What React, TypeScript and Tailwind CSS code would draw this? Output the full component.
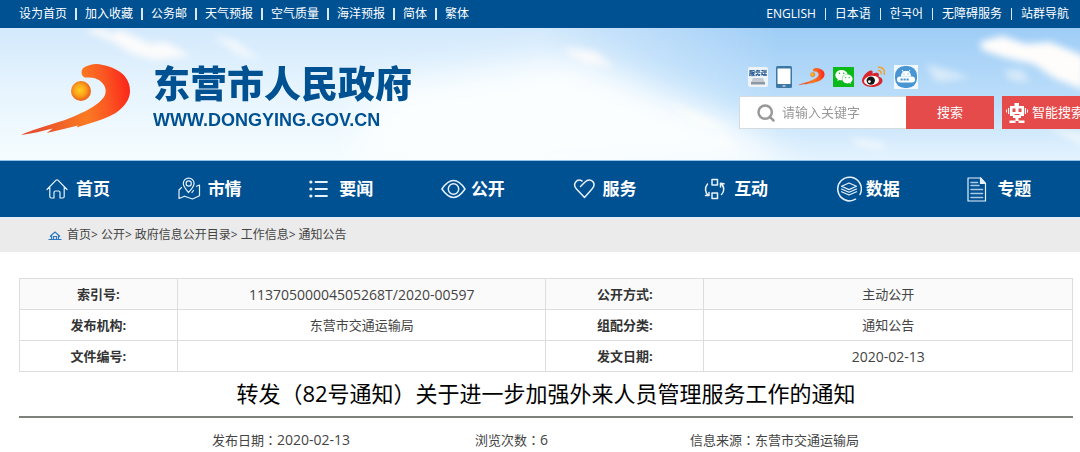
import type { ReactNode } from 'react';
import { Search } from 'lucide-react';
import { FaWeixin } from 'react-icons/fa';

/* ---------------- Data ---------------- */
const leftLinks = ['设为首页', '加入收藏', '公务邮', '天气预报', '空气质量', '海洋预报', '简体', '繁体'];
const rightLinks = ['ENGLISH', '日本语', '한국어', '无障碍服务', '站群导航'];
const crumbs = ['首页', '公开', '政府信息公开目录', '工作信息', '通知公告'];

const infoRows = [
  ['索引号:', '11370500004505268T/2020-00597', '公开方式:', '主动公开'],
  ['发布机构:', '东营市交通运输局', '组配分类:', '通知公告'],
  ['文件编号:', '', '发文日期:', '2020-02-13'],
];

/* ---------------- Nav icons ---------------- */
const NavIcon = ({ children }: { children: ReactNode }) => (
  <svg
    viewBox="0 0 26 26"
    className="h-[26px] w-[26px] shrink-0"
    fill="none"
    stroke="#e6f1fb"
    strokeWidth="1.2"
    strokeLinecap="round"
    strokeLinejoin="round"
    aria-hidden="true"
  >
    {children}
  </svg>
);

const navItems = [
  {
    label: '首页',
    icon: (
      <path d="M1 13.500 9.800 4.400q1.200-1 2.400 0L21 13.500M3.800 11.500V20.500q0 1.500 1.500 1.500H8V16.500q0-1.500 1.500-1.500h3q1.500 0 1.500 1.500V22h2.700q1.500 0 1.500-1.500v-9" />
    ),
  },
  {
    label: '市情',
    icon: (
      <>
        <path d="M10.500 16.500C7.500 13 5.300 10.500 5.300 7.500a5.400 5.400 0 0 1 10.800 0c0 3-2.600 5.500-5.600 9Z" />
        <circle cx="10.700" cy="7.500" r="2.600" />
        <path d="M3.500 11.500 1 14v8.500l5.500-2.300 8 2.800 7-3.300V9L18.500 10.200M15.500 14.500l-1.500 2" />
      </>
    ),
  },
  {
    label: '要闻',
    icon: (
      <>
        <path strokeWidth="1.800" d="M6.500 6H18M6.500 13H18M6.500 20H18" />
        <path strokeWidth="3.200" d="M1.800 6h.1M1.800 13h.1M1.800 20h.1" />
      </>
    ),
  },
  {
    label: '公开',
    icon: (
      <g strokeWidth="1.500">
        <path d="M.9 13C5 7 8.500 4.600 12.500 4.600S20 7 24 13c-4 6-7.500 8.400-11.500 8.400S5 19 .9 13Z" />
        <circle cx="12.500" cy="13" r="5.200" />
      </g>
    ),
  },
  {
    label: '服务',
    icon: (
      <path
        strokeWidth="1.500"
        d="M7.500 10.500 12 6c3-3 6.500-2.500 8.200 0 1.500 2.500.8 5-1.200 7l-7.500 8.500L3.500 13c-2-2.200-2.400-5-.8-7C4.500 3.700 7 3.800 9 5"
      />
    ),
  },
  {
    label: '互动',
    icon: (
      <g strokeWidth="1.500">
        <path d="M8 3.500h5.500V9H8zM8 17h5.500v5.500H8z" />
        <path d="M3.500 8C.5 11.500 1 17 4.500 19.500M1.500 19.500h3.500V16.500M17.500 18.500c3.200-3 3-8.500-.8-11M20 7.800l-3.500-.5V11" />
      </g>
    ),
  },
  {
    label: '数据',
    icon: (
      <>
        <path strokeWidth="1.500" d="M24 18.500A11.800 11.800 0 1 0 19.500 23.200" />
        <path d="m13 7 7.500 3.300-7.500 3.300-7.500-3.300ZM5.500 13l7.500 3.300 7.500-3.300M5.500 15.700l7.500 3.300 7.500-3.300" />
      </>
    ),
  },
  {
    label: '专题',
    icon: (
      <>
        <path d="M1 2h12.500l5 5.500V25H1z" />
        <path fill="#e6f1fb" d="M13.500 2v5.500h5z" />
        <path stroke="#a9cbe6" strokeWidth="1.600" d="M4 6.500h6.500M4 9.500h8M4 13.500h11.500M4 17.500h11.500M4 21.500h11.500" />
      </>
    ),
  },
];

/* ---------------- Drawings ---------------- */
const Swoosh = ({ className, id }: { className: string; id: string }) => (
  <svg viewBox="0 0 112 74" className={className} aria-hidden="true">
    <defs>
      <linearGradient id={id} x1="0" x2="1" y1="0.3" y2="0.2">
        <stop offset="0.1" stopColor="#e8502e" />
        <stop offset="0.55" stopColor="#fb7a22" />
        <stop offset="0.75" stopColor="#fb5a22" />
        <stop offset="1" stopColor="#fb2218" />
      </linearGradient>
      <radialGradient id={`${id}-ball`} cx="0.45" cy="0.45">
        <stop offset="0" stopColor="#ffd21f" />
        <stop offset="0.6" stopColor="#fba01c" />
        <stop offset="1" stopColor="#ee6a1a" />
      </radialGradient>
    </defs>
    <path
      fill={`url(#${id})`}
      d="M61.700 7C62 4 66 2 70 1 74-.3 78-.3 83 1c9 2 18 6 22 11.500 3.500 4.500 5 9 5 14.500 0 6-3 12-8.500 17.300C95 51 85 54.500 75 57.700L56.700 63.500 58 61.500 41.700 65.500 26.700 69l6-4.500C23 67 12 69.500 1 71c7-4 24-8.500 44-15 10-3.800 20-8.300 28-13.300 8-5 12.700-10 12.700-15.700C85.700 21 81 16.500 75 14.300c-3-1-8 .2-11.200-1.300-2-1.500-2.500-3.500-2.100-6Z"
    />
    <circle cx="61" cy="27" r="10" fill={`url(#${id}-ball)`} />
  </svg>
);

const Sky = () => (
  <svg
    viewBox="0 0 1080 132"
    preserveAspectRatio="none"
    className="absolute inset-0 h-full w-full"
    aria-hidden="true"
  >
    <defs>
      <linearGradient id="sky-base" x2="0" y2="1">
        <stop offset="0" stopColor="#d3e9fc" />
        <stop offset="0.5" stopColor="#e8f5fe" />
        <stop offset="1" stopColor="#f5fcff" />
      </linearGradient>
      <linearGradient id="sky-deep" x2="0" y2="1">
        <stop offset="0" stopColor="#9fcdf6" />
        <stop offset="0.55" stopColor="#bcdefa" />
        <stop offset="1" stopColor="#e4f3fe" />
      </linearGradient>
      <linearGradient id="sky-fade">
        <stop offset="0.5" stopColor="#000" />
        <stop offset="0.72" stopColor="#fff" />
      </linearGradient>
      <mask id="sky-mask">
        <rect width="1080" height="132" fill="url(#sky-fade)" />
      </mask>
      <filter id="soft" x="-30%" y="-60%" width="160%" height="220%">
        <feGaussianBlur stdDeviation="3.500" />
      </filter>
      <filter id="haze" x="-30%" y="-60%" width="160%" height="220%">
        <feGaussianBlur stdDeviation="16" />
      </filter>
    </defs>
    <rect width="1080" height="132" fill="url(#sky-base)" />
    <rect width="1080" height="132" fill="url(#sky-deep)" mask="url(#sky-mask)" />
    <path filter="url(#haze)" fill="#fbfeff" d="M380 60 570 30 720 90 800 140H350Z" />
    <g filter="url(#soft)" fill="#fffdfb">
      <path d="M84 2 100 0l12 6 8-4 22 10 8 4 16-2 24 14-34 4-24-6-18-12Z" opacity="0.9" />
      <path d="m212 8 24 4 24 20-20-4Z" opacity="0.6" />
      <path d="m562 20 32 3 20 16-30-3Z" opacity="0.8" />
      <path d="m668 74 40 16 24 12-34-4Z" opacity="0.7" />
      <path d="m980 14 22-6 24 8 24-2 34 14v34l-30-12-20-14-28-6-24-8Z" />
      <path d="m926 36 22 6 22 8-34 4ZM1004 42l18 0 8 12-20-2Z" opacity="0.5" />
      <path d="m718 104 20 12-20 4ZM850 110l30 4 8 8-30-4ZM1044 98l40 8v12Z" opacity="0.6" />
    </g>
  </svg>
);

const ServiceIcon = () => (
  <svg viewBox="0 0 20 20" className="h-5 w-5" aria-hidden="true">
    <rect width="20" height="20" rx="2" fill="#eef3f8" />
    <text x="10" y="7.500" textAnchor="middle" fontSize="6" fontWeight="900" fill="#23578f">服务端</text>
    <path fill="#c3cad2" d="M5 11h10l2 5H3z" />
    <path fill="#8e98a3" d="M3 15h14v2.500H3z" />
  </svg>
);

const PhoneIcon = () => (
  <svg viewBox="0 0 16 22" className="h-[22px] w-4" aria-hidden="true">
    <rect width="16" height="22" rx="1.500" fill="#3d78a5" />
    <path fill="#fff" d="M1.500 2.500h13v15.500h-13z" />
    <path fill="#fff" d="M6.500 19.500h3v1h-3z" />
  </svg>
);

const WeiboIcon = () => (
  <svg viewBox="0 0 24 22" className="h-[22px] w-6" aria-hidden="true">
    <path
      fill="#d9242b"
      d="M9.500 4.500c1.500.3 1.200 2 .9 3.300 3-1.300 6.500-1.600 6.500 1 0 .8-.2 1.200-.3 1.600 2.400.8 3.900 2 3.900 4C20.500 18.300 15 21 9.800 21 4.500 21 0 18.500 0 14.800 0 10.500 6.200 4 9.500 4.500Z"
    />
    <ellipse cx="9.500" cy="14.600" rx="7.500" ry="4.800" fill="#fff" transform="rotate(-7 9.500 14.600)" />
    <circle cx="8.800" cy="14.600" r="4.200" fill="#151515" />
    <circle cx="7.400" cy="15.600" r="1.400" fill="#fff" />
    <path fill="none" stroke="#f2a12c" strokeWidth="1.500" strokeLinecap="round" d="M16.500 1.200c4.300-.5 6.700 3 5.700 7M16.500 4.500c2 0 3 1.300 2.600 3.200" />
  </svg>
);

const AppIcon = () => (
  <svg viewBox="0 0 24 24" className="h-6 w-6" aria-hidden="true">
    <rect width="24" height="24" fill="#f2f8fd" />
    <rect x="1" y="1" width="22" height="22" rx="9.500" fill="#4795d3" />
    <path fill="#fff" d="M7 11.500c0-3.500 2-5.500 5-5.500s5 2 5 5.500z" />
    <path stroke="#fff" d="m8 5 1.500 2M16 5l-1.500 2" />
    <rect x="3" y="11.500" width="18" height="6" rx="3" fill="#fff" />
    <path stroke="#4795d3" strokeWidth="1.800" d="M6.500 14.500h2.200M9.500 14.500h2.200M12.500 14.500h2.200" />
    <path fill="#4795d3" d="M9.500 8.500h1v1h-1zM13.500 8.500h1v1h-1z" />
  </svg>
);

const RobotIcon = () => (
  <svg viewBox="0 0 22 22" className="h-[22px] w-[22px] shrink-0" aria-hidden="true">
    <g fill="#fff">
      <path d="M8.500 1h4.500v3H8.500zM4 4h14v10H4zM2 6h1.200v6H2zM18.800 6H20v6h-1.200zM0 7.500h1v3H0zM21 7.500h1v3h-1zM7 14h8v2H7zM9.500 16h3v3h-3zM3.500 18.500h6V21h-6zM12.500 18.500h6V21h-6z" />
    </g>
    <g fill="#e54b4b">
      <path d="M6.500 6.500h3v3.500h-3zM12.500 6.500h3v3.500h-3zM8.500 12h5v1h-5z" />
    </g>
  </svg>
);

/* ---------------- Small parts ---------------- */
const LinkStrip = ({ links, divider }: { links: string[]; divider: string }) => (
  <ul className="flex items-center">
    {links.map((link, index) => (
      <li key={link} className="flex items-center">
        {index > 0 && <span className={`h-3 bg-[#dbe8f3] ${divider}`} />}
        <a href="#" className="whitespace-nowrap">{link}</a>
      </li>
    ))}
  </ul>
);

// full-width punctuation that sits in the middle of its square
const Mark = ({ children }: { children: string }) => (
  <span className="font-['Noto_Sans_CJK_TC',sans-serif]">{children}</span>
);

const MetaItem = ({ label, value }: { label: string; value: ReactNode }) => (
  <p>
    {label}
    <Mark>：</Mark>
    {value}
  </p>
);

const valueSize = (value: string) => (/^\d/.test(value) ? 'text-sm' : 'text-[13px]');

/* ---------------- Page ---------------- */
const App = () => {
  return (
    <div className="overflow-hidden bg-white font-['Open_Sans','Noto_Sans_CJK_SC','Noto_Sans_CJK_KR',sans-serif] text-[13px] text-[#444]">
      <div className="flex h-7 items-center justify-between bg-[#005192] pr-[11px] pl-[19px] text-xs text-white">
        <LinkStrip links={leftLinks} divider="mx-2 w-0.5" />
        <LinkStrip links={rightLinks} divider="mx-[9px] w-px" />
      </div>

      <header className="relative overflow-hidden border-b border-[#8fc1e6]">
        <Sky />
        <div className="relative flex justify-between pr-[7px] pl-5">
          <a href="#" className="flex h-[132px] pt-9 text-[#005192]">
            <Swoosh id="logo" className="h-[74px] w-28" />
            <span className="ml-[21px] flex flex-col">
              <span className="text-[37px] leading-10 font-black">东营市人民政府</span>
              <span className="mt-1 font-['Liberation_Sans',sans-serif] text-lg leading-6 font-bold">WWW.DONGYING.GOV.CN</span>
            </span>
          </a>

          <div className="w-[334px] shrink-0 pt-[37px]">
            <div className="flex h-6 items-center pl-[9px]">
              <a href="#" aria-label="服务端"><ServiceIcon /></a>
              <a href="#" aria-label="手机版" className="ml-2"><PhoneIcon /></a>
              <a href="#" aria-label="门户" className="ml-1.5"><Swoosh id="portal" className="h-[18px] w-[27px]" /></a>
              <a href="#" aria-label="微信" className="ml-2 flex h-5 w-[21px] items-center justify-center bg-[#0cb91b] text-white">
                <FaWeixin size={18} />
              </a>
              <a href="#" aria-label="微博" className="ml-2"><WeiboIcon /></a>
              <a href="#" aria-label="应用" className="ml-2"><AppIcon /></a>
            </div>

            <div className="mt-[7px] flex h-[33px]">
              <form className="flex shrink-0">
                <label className="flex w-[167px] items-center border border-r-0 border-[#d5dade] bg-white pl-4">
                  <Search className="h-5 w-5 shrink-0 text-[#999]" strokeWidth={3} />
                  <input
                    type="text"
                    placeholder="请输入关键字"
                    aria-label="请输入关键字"
                    className="ml-1.5 w-full min-w-0 bg-transparent outline-none placeholder:text-[#999]"
                  />
                </label>
                <button type="button" className="w-[88px] bg-[#e54b4b] text-white">搜索</button>
              </form>
              <button type="button" className="ml-2 flex w-24 shrink-0 items-center bg-[#e54b4b] pl-1 whitespace-nowrap text-white">
                <RobotIcon />
                <span className="ml-1">智能搜索</span>
              </button>
            </div>
          </div>
        </div>
      </header>

      <nav className="grid h-14 grid-cols-8 bg-[#005192] pr-[7px] pl-5 text-[17px] font-bold text-white">
        {navItems.map((item) => (
          <a key={item.label} href="#" className="flex items-center pl-[26px] whitespace-nowrap">
            <NavIcon>{item.icon}</NavIcon>
            <span className="ml-1">{item.label}</span>
          </a>
        ))}
      </nav>

      <div className="flex h-[35px] items-center gap-[3px] border-t-2 border-[#e6edf6] bg-[#ebebeb] pb-0.5 pl-12 text-xs">
        <svg viewBox="0 0 14 12" className="mr-0.5 h-3 w-3.5" fill="none" stroke="#2d78c4" strokeWidth="1.2" aria-hidden="true">
          <path d="M2 7.500 7 3l5 4.500M3.500 6.500v4M10.500 6.500v4M.5 10.500h13M5.500 10V7.500h3V10" />
        </svg>
        {crumbs.map((crumb, index) => (
          <span key={crumb}>
            <a href="#">{crumb}</a>
            {index < crumbs.length - 1 && '>'}
          </span>
        ))}
      </div>

      <main className="pt-[26px] pr-[7px] pb-1 pl-[19px]">
        <table className="w-full table-fixed border-collapse text-center">
          <colgroup>
            <col className="w-[15%]" />
            <col className="w-[35%]" />
            <col className="w-[15%]" />
            <col className="w-[35%]" />
          </colgroup>
          <tbody>
            {infoRows.map(([labelA, valueA, labelB, valueB]) => (
              <tr key={labelA} className="h-[31px] first:bg-[#fafafa]">
                <th scope="row" className="border border-[#ddd] pt-0.5 text-[#333]">{labelA}</th>
                <td className={`border border-[#ddd] pt-0.5 ${valueSize(valueA)}`}>{valueA}</td>
                <th scope="row" className="border border-[#ddd] pt-0.5 text-[#333]">{labelB}</th>
                <td className={`border border-[#ddd] pt-0.5 ${valueSize(valueB)}`}>{valueB}</td>
              </tr>
            ))}
          </tbody>
        </table>

        <h1 className="border-b-2 border-[#7d827d] pb-[3px] text-center text-[22px] leading-10 text-black">
          转发<Mark>（</Mark>82号通知<Mark>）</Mark>关于进一步加强外来人员管理服务工作的通知
        </h1>

        <div className="flex pt-3 pl-[193px] leading-5">
          <div className="w-[263px]">
            <MetaItem label="发布日期" value={<span className="text-sm leading-5">2020-02-13</span>} />
          </div>
          <div className="w-[215px]">
            <MetaItem label="浏览次数" value={<span className="text-sm leading-5">6</span>} />
          </div>
          <MetaItem label="信息来源" value="东营市交通运输局" />
        </div>
      </main>
    </div>
  );
};

export default App;
